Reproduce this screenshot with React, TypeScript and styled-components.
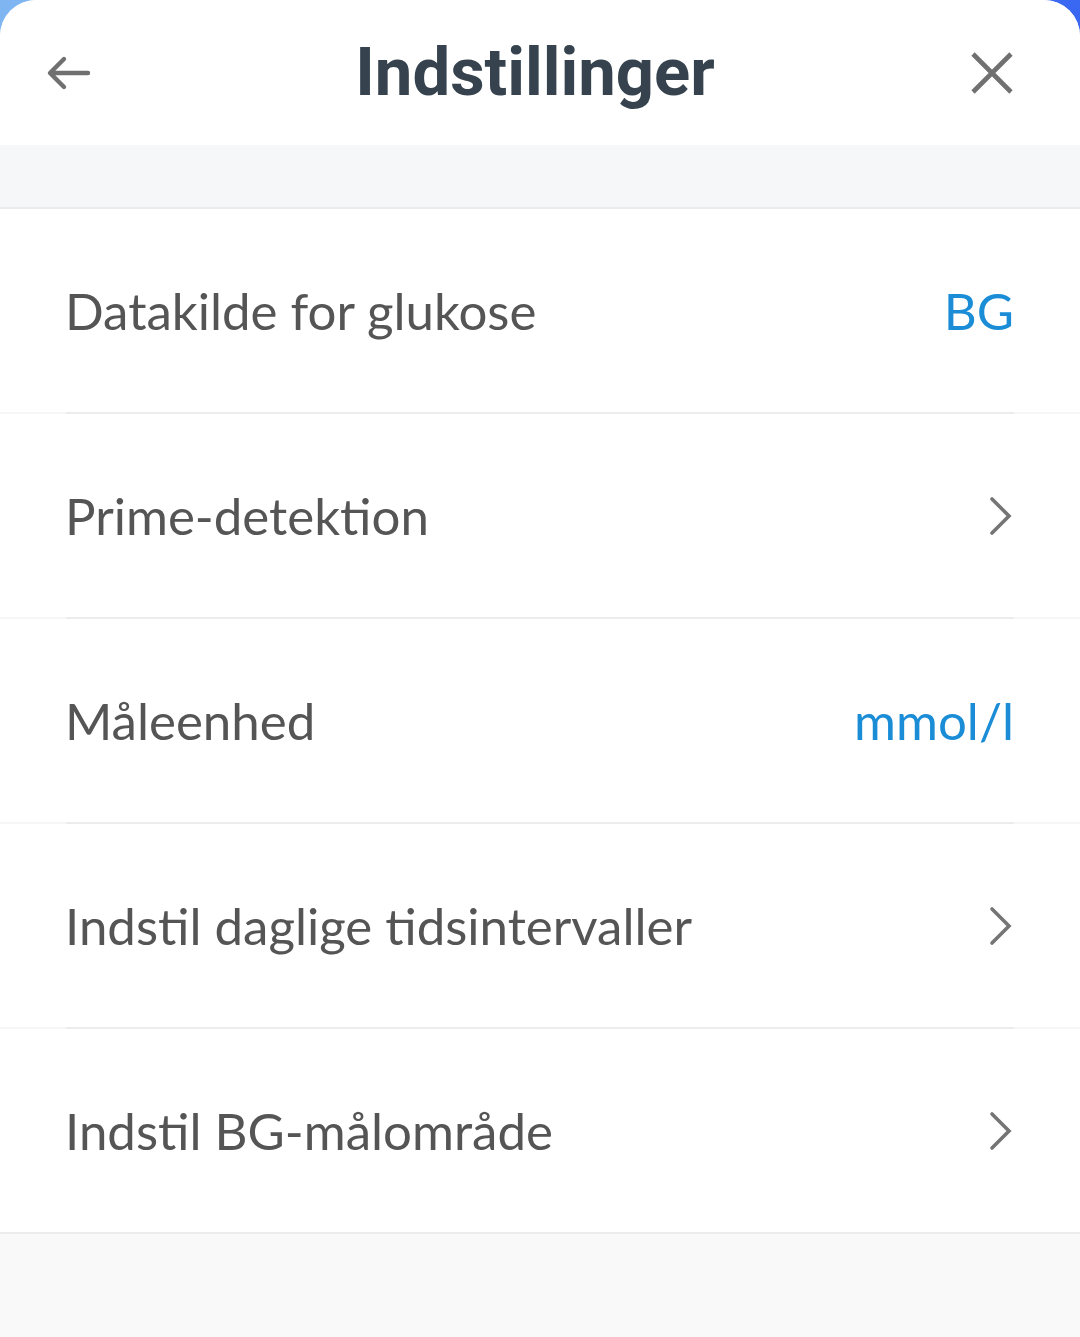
import React from "react";
import styled, { createGlobalStyle } from "styled-components";

const Global = createGlobalStyle`
  html, body {
    margin: 0;
    padding: 0;
  }
  body {
    background: linear-gradient(90deg, #7fb6f2 0%, #5b8ff2 50%, #3a67f2 100%);
    font-family: "Lato", "Noto Sans", sans-serif;
  }
`;

const Sheet = styled.div`
  min-height: 1337px;
  background: #f9f9f9;
  border-radius: 36px 36px 0 0;
  overflow: hidden;
  display: flex;
  flex-direction: column;
`;

const Header = styled.header`
  height: 145px;
  background: #ffffff;
  display: grid;
  grid-template-columns: 120px 1fr 120px;
  align-items: center;
  padding: 0 66px 0 46px;
  box-sizing: border-box;
`;

const Title = styled.h1`
  margin: 0;
  text-align: center;
  font-family: "Roboto", "Noto Sans", sans-serif;
  font-weight: 700;
  font-size: 67px;
  color: #36434e;
  letter-spacing: 0;
  padding-left: 10px;
  line-height: 1;
`;

const IconButton = styled.button<{ $align: "start" | "end" }>`
  border: none;
  background: none;
  padding: 0;
  display: flex;
  justify-content: ${(p) => (p.$align === "start" ? "flex-start" : "flex-end")};
  align-items: center;
  color: #707070;
  cursor: pointer;
`;

const Band = styled.div`
  height: 62px;
  background: #f6f7f9;
  border-bottom: 2px solid #ececec;
`;

const List = styled.ul`
  list-style: none;
  margin: 0;
  padding: 0;
  background: #ffffff;
  box-shadow: 0 2px 3px rgba(0, 0, 0, 0.05);
  border-bottom: 2px solid #ececec;
`;

const Row = styled.li`
  height: 203px;
  display: flex;
  align-items: center;
  justify-content: space-between;
  padding: 0 66px 0 65px;
`;

const Divider = styled.li`
  height: 2px;
  background: linear-gradient(
    90deg,
    #f6f6f6 66px,
    #ececec 66px,
    #ececec calc(100% - 66px),
    #f6f6f6 calc(100% - 66px)
  );
`;

const Label = styled.span`
  font-family: "Lato", "Noto Sans", sans-serif;
  font-size: 51px;
  color: #555555;
`;

const Value = styled.span`
  font-family: "Lato", "Noto Sans", sans-serif;
  font-size: 51px;
  color: #1b8dd6;
`;

const Rest = styled.div`
  flex: 1;
  background: #f9f9f9;
`;

const Chevron = () => (
  <svg width="26" height="40" viewBox="0 0 26 40" fill="none">
    <path d="M4 3 L21 20 L4 37" stroke="#757575" strokeWidth="3.6" strokeLinecap="round" strokeLinejoin="miter" />
  </svg>
);

const BackArrow = () => (
  <svg width="46" height="36" viewBox="0 0 46 36" fill="none">
    <path d="M42 18 H5 M18 4 L4 18 L18 32" stroke="#707070" strokeWidth="4.4" strokeLinecap="round" strokeLinejoin="round" />
  </svg>
);

const CloseIcon = () => (
  <svg width="44" height="44" viewBox="0 0 44 44" fill="none">
    <path d="M3 3 L41 41 M41 3 L3 41" stroke="#707070" strokeWidth="4.6" strokeLinecap="butt" />
  </svg>
);

type Item = { label: string; value?: string };

const items: Item[] = [
  { label: "Datakilde for glukose", value: "BG" },
  { label: "Prime-detektion" },
  { label: "Måleenhed", value: "mmol/l" },
  { label: "Indstil daglige tidsintervaller" },
  { label: "Indstil BG-målområde" },
];

export default function App() {
  return (
    <>
      <Global />
      <Sheet>
        <Header>
          <IconButton $align="start" aria-label="Tilbage">
            <BackArrow />
          </IconButton>
          <Title>Indstillinger</Title>
          <IconButton $align="end" aria-label="Luk">
            <CloseIcon />
          </IconButton>
        </Header>
        <Band />
        <List>
          {items.map((it, i) => (
            <React.Fragment key={it.label}>
              {i > 0 && <Divider />}
              <Row>
                <Label>{it.label}</Label>
                {it.value ? <Value>{it.value}</Value> : <Chevron />}
              </Row>
            </React.Fragment>
          ))}
        </List>
        <Rest />
      </Sheet>
    </>
  );
}
